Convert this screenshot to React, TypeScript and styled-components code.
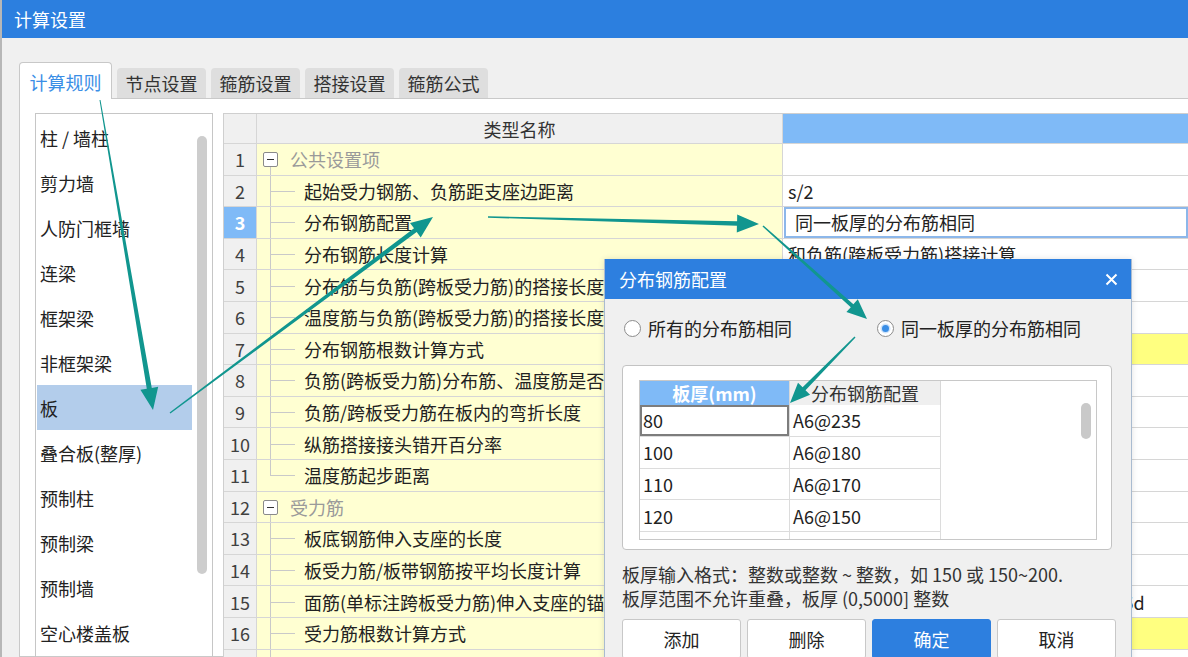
import styled, { createGlobalStyle, css } from "styled-components";

const font = `"Noto Sans CJK SC", "Noto Sans", sans-serif`;

const GlobalStyle = createGlobalStyle`
    html, body {
        margin: 0;
        padding: 0;
        overflow: hidden;
        font-family: ${font};
        font-size: 18px;
        color: #222;
    }

    * {
        box-sizing: border-box;
    }
`;

type RowKind = "group" | "child" | "last";

type Row = {
    n: number;
    kind: RowKind;
    name: string;
    value?: string;
    editing?: boolean;
    yellow?: boolean;
};

const rows: Row[] = [
    { n: 1, kind: "group", name: "公共设置项" },
    { n: 2, kind: "child", name: "起始受力钢筋、负筋距支座边距离", value: "s/2" },
    { n: 3, kind: "child", name: "分布钢筋配置", value: "同一板厚的分布筋相同", editing: true },
    { n: 4, kind: "child", name: "分布钢筋长度计算", value: "和负筋(跨板受力筋)搭接计算" },
    { n: 5, kind: "child", name: "分布筋与负筋(跨板受力筋)的搭接长度", value: "150" },
    { n: 6, kind: "child", name: "温度筋与负筋(跨板受力筋)的搭接长度", value: "ll" },
    { n: 7, kind: "child", name: "分布钢筋根数计算方式", value: "向下取整+1", yellow: true },
    { n: 8, kind: "child", name: "负筋(跨板受力筋)分布筋、温度筋是否带弯勾", value: "否" },
    { n: 9, kind: "child", name: "负筋/跨板受力筋在板内的弯折长度", value: "板厚-2*保护层" },
    { n: 10, kind: "child", name: "纵筋搭接接头错开百分率", value: "50%" },
    { n: 11, kind: "last", name: "温度筋起步距离", value: "s" },
    { n: 12, kind: "group", name: "受力筋" },
    { n: 13, kind: "child", name: "板底钢筋伸入支座的长度", value: "max(ha/2,5*d)" },
    { n: 14, kind: "child", name: "板受力筋/板带钢筋按平均长度计算", value: "否" },
    { n: 15, kind: "child", name: "面筋(单标注跨板受力筋)伸入支座的锚固长度", value: "能直锚时直锚，否则按公式计算:ha-bhc+15d" },
    { n: 16, kind: "child", name: "受力筋根数计算方式", value: "向上取整+1", yellow: true },
    { n: 17, kind: "child", name: "跨板受力筋标注长度位置", value: "支座中心线" },
];

const listItems = [
    "柱 / 墙柱",
    "剪力墙",
    "人防门框墙",
    "连梁",
    "框架梁",
    "非框架梁",
    "板",
    "叠合板(整厚)",
    "预制柱",
    "预制梁",
    "预制墙",
    "空心楼盖板",
    "螺旋板",
];

const tabs = ["计算规则", "节点设置", "箍筋设置", "搭接设置", "箍筋公式"];

const slabRows = [
    ["80", "A6@235"],
    ["100", "A6@180"],
    ["110", "A6@170"],
    ["120", "A6@150"],
    ["130", "A6@140"],
];

// annotation arrows: x1, y1, tip x, tip y, start width, end width, head length, head half width
const arrows: number[][] = [
    [100, 100, 153, 410, 1, 5, 22, 9],
    [170, 413, 433, 217, 1.5, 4.5, 22, 9],
    [488, 217, 759, 224, 1.5, 4.5, 22, 9],
    [763, 226, 867, 319, 1.5, 4, 20, 8.5],
    [855, 337, 790, 403, 1.5, 4, 20, 8.5],
];

const arrowPoints = ([x1, y1, x2, y2, w0, w1, hl, hw]: number[]) => {
    const dx = x2 - x1;
    const dy = y2 - y1;
    const len = Math.hypot(dx, dy);
    const ux = dx / len;
    const uy = dy / len;
    const nx = -uy;
    const ny = ux;
    const bx = x2 - ux * hl;
    const by = y2 - uy * hl;
    const p = (x: number, y: number) => `${x.toFixed(1)},${y.toFixed(1)}`;
    return [
        p(x1 + (nx * w0) / 2, y1 + (ny * w0) / 2),
        p(bx + (nx * w1) / 2, by + (ny * w1) / 2),
        p(bx + nx * hw, by + ny * hw),
        p(x2, y2),
        p(bx - nx * hw, by - ny * hw),
        p(bx - (nx * w1) / 2, by - (ny * w1) / 2),
        p(x1 - (nx * w0) / 2, y1 - (ny * w0) / 2),
    ].join(" ");
};

const App = () => {
    return (
        <>
            <GlobalStyle />
            <Window>
                <TitleBar>计算设置</TitleBar>
                <Body>
                    <TabStrip>
                        {tabs.map((t, i) => (
                            <Tab key={t} $active={i === 0}>
                                {t}
                            </Tab>
                        ))}
                    </TabStrip>
                    <Panel>
                        <ListBox>
                            <ListItems>
                                {listItems.map((item) => (
                                    <ListItem key={item} $selected={item === "板"}>
                                        {item}
                                    </ListItem>
                                ))}
                            </ListItems>
                            <ScrollLane>
                                <ListThumb />
                            </ScrollLane>
                        </ListBox>
                        <Table>
                            <NumHead />
                            <NameHead>类型名称</NameHead>
                            <ValueHead />
                            {rows.map((r) => (
                                <TableRow key={r.n} row={r} />
                            ))}
                        </Table>
                    </Panel>
                </Body>

                <Dialog>
                    <DialogTitle>
                        分布钢筋配置
                        <svg width="13" height="13" viewBox="0 0 13 13">
                            <path d="M1.5 1.5 L11.5 11.5 M11.5 1.5 L1.5 11.5" stroke="#fff" strokeWidth="2" />
                        </svg>
                    </DialogTitle>
                    <DialogBody>
                        <RadioRow>
                            <RadioOption>
                                <RadioCircle />
                                所有的分布筋相同
                            </RadioOption>
                            <RadioOption>
                                <RadioCircle $checked />
                                同一板厚的分布筋相同
                            </RadioOption>
                        </RadioRow>
                        <GroupBox>
                            <InnerTable>
                                <SlabGrid>
                                    <SlabHead $blue>板厚(mm)</SlabHead>
                                    <SlabHead>分布钢筋配置</SlabHead>
                                    {slabRows.map(([t, cfg], i) => (
                                        <SlabRowCells key={t}>
                                            <SlabCell $selected={i === 0}>{t}</SlabCell>
                                            <SlabCell>{cfg}</SlabCell>
                                        </SlabRowCells>
                                    ))}
                                </SlabGrid>
                                <EmptyArea>
                                    <SmallThumb />
                                </EmptyArea>
                            </InnerTable>
                        </GroupBox>
                        <Hint>
                            板厚输入格式：整数或整数 ~ 整数，如 150 或 150~200.
                            <br />
                            板厚范围不允许重叠，板厚 (0,5000] 整数
                        </Hint>
                        <ButtonRow>
                            <Button>添加</Button>
                            <Button>删除</Button>
                            <Button $primary>确定</Button>
                            <Button>取消</Button>
                        </ButtonRow>
                    </DialogBody>
                </Dialog>

                <Arrows width="1188" height="657" viewBox="0 0 1188 657">
                    {arrows.map((a, i) => (
                        <polygon key={i} points={arrowPoints(a)} fill="#11968f" />
                    ))}
                </Arrows>
            </Window>
        </>
    );
};

const TableRow = ({ row }: { row: Row }) => {
    const isGroup = row.kind === "group";
    return (
        <>
            <NumCell $active={row.n === 3}>{row.n}</NumCell>
            <NameCell>
                <Guide $kind={row.kind}>{isGroup && <MinusBox />}</Guide>
                <NameText $group={isGroup}>{row.name}</NameText>
            </NameCell>
            <ValueCell $yellow={row.yellow}>
                {row.editing ? <EditBox>{row.value}</EditBox> : <ValueText>{row.value}</ValueText>}
            </ValueCell>
        </>
    );
};

const Window = styled.div`
    position: relative;
    width: 1188px;
    height: 657px;
    overflow: hidden;
    display: flex;
    flex-direction: column;

    background: #f0f0f0;
    border-left: 2px solid #b7b7b7;
`;

const TitleBar = styled.div`
    height: 38px;
    flex-shrink: 0;
    display: flex;
    align-items: center;

    padding-left: 12px;

    background: #2c7fdf;
    color: #fff;
    font-size: 18px;
    line-height: 1;
`;

const Body = styled.div`
    flex: 1;
    min-height: 0;
    display: flex;
    flex-direction: column;

    padding: 24px 0 0 17px;
`;

const TabStrip = styled.div`
    display: flex;
    align-items: flex-end;
    gap: 5px;

    height: 36px;
    flex-shrink: 0;
    position: relative;
    z-index: 1;
`;

const Tab = styled.div<{ $active?: boolean }>`
    display: flex;
    align-items: center;
    justify-content: center;

    width: 89px;
    height: 30px;

    background: #dedede;
    border-radius: 4px 4px 0 0;
    color: #333;
    font-size: 18px;
    line-height: 1;

    ${({ $active }) =>
        $active &&
        css`
            width: 93px;
            height: 37px;
            margin-bottom: -1px;
            padding-top: 2px;

            background: #fff;
            border: 1px solid #c8c8c8;
            border-bottom: none;
            color: #3a8ee6;
        `}
`;

const Panel = styled.div`
    flex: 1;
    min-height: 0;
    display: flex;
    align-items: flex-start;

    padding: 14px 0 0 15px;

    background: #fff;
    border: 1px solid #c9c9c9;
    border-right: none;
`;

const ListBox = styled.div`
    display: flex;
    flex-shrink: 0;
    overflow: hidden;

    width: 178px;
    height: 580px;
    padding: 1px;

    border: 1px solid #c6c6c6;
`;

const ListItems = styled.div`
    display: flex;
    flex-direction: column;
    flex-shrink: 0;

    width: 155px;
`;

const ListItem = styled.div<{ $selected?: boolean }>`
    display: flex;
    align-items: center;
    flex-shrink: 0;

    height: 45px;
    padding-left: 3px;

    background: ${({ $selected }) => ($selected ? "#b3cdeb" : "transparent")};
    color: #222;
    font-size: 18px;
    line-height: 1;
    white-space: nowrap;
`;

const ScrollLane = styled.div`
    flex: 1;
    display: flex;
    justify-content: center;
    align-items: flex-start;
    padding-top: 21px;
`;

const ListThumb = styled.div`
    width: 10px;
    height: 438px;

    background: #cdcdcd;
    border-radius: 5px;
`;

const Table = styled.div`
    flex: 1;
    display: grid;
    grid-template-columns: 33px 526px 1fr;

    margin-left: 10px;

    border-top: 1px solid #cfcfcf;
    border-left: 1px solid #cfcfcf;
`;

const cellBase = css`
    display: flex;
    align-items: center;
    overflow: hidden;

    height: 31.6px;

    border-right: 1px solid #d6d6d6;
    border-bottom: 1px solid #d6d6d6;
    font-size: 18px;
    line-height: 1;
    white-space: nowrap;
`;

const NumHead = styled.div`
    ${cellBase};
    height: 30px;
    background: #f0f0f0;
`;

const NameHead = styled(NumHead)`
    justify-content: center;
    color: #333;
`;

const ValueHead = styled(NumHead)`
    background: #7fbaf7;
    border-right: none;
`;

const NumCell = styled.div<{ $active?: boolean }>`
    ${cellBase};
    justify-content: center;

    background: ${({ $active }) => ($active ? "#7fbaf7" : "#f0f0f0")};
    color: ${({ $active }) => ($active ? "#fff" : "#404040")};
    font-weight: ${({ $active }) => ($active ? 700 : 400)};
`;

const NameCell = styled.div`
    ${cellBase};
    background: #ffffd2;
`;

const Guide = styled.span<{ $kind: RowKind }>`
    position: relative;
    flex-shrink: 0;
    align-self: stretch;
    width: 47px;

    &::before {
        content: "";
        position: absolute;
        left: 13px;
        width: 1px;
        background: #c9c9c9;
        top: ${({ $kind }) => ($kind === "group" ? "calc(50% + 7px)" : "0")};
        bottom: ${({ $kind }) => ($kind === "last" ? "50%" : "-1px")};
    }

    &::after {
        content: "";
        display: ${({ $kind }) => ($kind === "group" ? "none" : "block")};
        position: absolute;
        left: 13px;
        top: 50%;
        width: 25px;
        height: 1px;
        background: #c9c9c9;
    }
`;

const MinusBox = styled.span`
    position: absolute;
    left: 6px;
    top: calc(50% - 7px);
    width: 15px;
    height: 15px;

    background: #fff;
    border: 1px solid #8a8a8a;
    border-radius: 2px;

    &::after {
        content: "";
        position: absolute;
        left: 3px;
        right: 3px;
        top: 6px;
        height: 1px;
        background: #333;
    }
`;

const NameText = styled.span<{ $group?: boolean }>`
    color: ${({ $group }) => ($group ? "#9a9a9a" : "#222")};
    margin-left: ${({ $group }) => ($group ? "-14px" : "0")};
`;

const ValueCell = styled.div<{ $yellow?: boolean }>`
    ${cellBase};
    border-right: none;
    background: ${({ $yellow }) => ($yellow ? "#ffff80" : "#fff")};
`;

const ValueText = styled.span`
    padding-left: 5px;
    color: #222;
`;

const EditBox = styled.div`
    display: flex;
    align-items: center;

    width: 100%;
    height: 100%;
    margin-left: 1px;
    padding-left: 9px;

    border: 2px solid #8cb7ea;
    color: #222;
`;

const Dialog = styled.div`
    position: absolute;
    left: 602px;
    top: 259px;
    width: 528px;
    height: 420px;
    z-index: 5;

    background: #f0f0f0;
    border: 1px solid #a9bbd0;
    border-top: none;
    box-shadow: 0 0 6px rgba(0, 0, 0, 0.12);
`;

const DialogTitle = styled.div`
    display: flex;
    align-items: center;
    justify-content: space-between;

    height: 40px;
    padding: 0 13px 0 14px;

    background: #2d7fdf;
    color: #fff;
    font-size: 18px;
    line-height: 1;
`;

const DialogBody = styled.div`
    padding: 17px 0 0 17px;
`;

const RadioRow = styled.div`
    display: grid;
    grid-template-columns: 253px auto;

    height: 24px;
    padding-left: 2px;
`;

const RadioOption = styled.label`
    display: flex;
    align-items: center;
    gap: 7px;

    color: #222;
    font-size: 18px;
    line-height: 1;
`;

const RadioCircle = styled.span<{ $checked?: boolean }>`
    display: flex;
    align-items: center;
    justify-content: center;

    width: 17px;
    height: 17px;

    background: #fff;
    border: 1px solid #8c8c8c;
    border-radius: 50%;

    &::after {
        content: "";
        display: ${({ $checked }) => ($checked ? "block" : "none")};
        width: 7px;
        height: 7px;
        border-radius: 50%;
        background: #3a8ee6;
        box-shadow: 0 0 0 1.5px #cfe3f9;
    }
`;

const GroupBox = styled.div`
    width: 490px;
    height: 185px;
    margin-top: 25px;
    padding: 14px 14px 0 16px;

    background: #fff;
    border: 1px solid #c3c3c3;
    border-radius: 4px;
`;

const InnerTable = styled.div`
    display: flex;
    height: 160px;
    overflow: hidden;

    border: 1px solid #c8c8c8;
`;

const SlabGrid = styled.div`
    display: grid;
    grid-template-columns: 150px 151px;
    align-content: start;
`;

const SlabRowCells = styled.div`
    display: contents;
`;

const SlabHead = styled.div<{ $blue?: boolean }>`
    display: flex;
    align-items: center;
    justify-content: center;

    height: 24px;

    background: ${({ $blue }) => ($blue ? "#7fbaf7" : "#efefef")};
    border-right: 1px solid #d8d8d8;
    color: ${({ $blue }) => ($blue ? "#fff" : "#333")};
    font-size: 18px;
    font-weight: ${({ $blue }) => ($blue ? 700 : 400)};
    line-height: 1;
`;

const SlabCell = styled.div<{ $selected?: boolean }>`
    display: flex;
    align-items: center;

    height: 31.8px;
    padding-left: 3px;

    border-right: 1px solid #dcdcdc;
    border-bottom: 1px solid #dcdcdc;
    color: #222;
    font-size: 18px;
    line-height: 1;

    ${({ $selected }) =>
        $selected &&
        css`
            box-shadow: inset 0 0 0 2px #7d7d7d;
        `}
`;

const EmptyArea = styled.div`
    flex: 1;
    display: flex;
    justify-content: flex-end;
    align-items: flex-start;

    padding: 22px 5px 0 0;
`;

const SmallThumb = styled.div`
    width: 10px;
    height: 36px;

    background: #c9c9c9;
    border-radius: 5px;
`;

const Hint = styled.p`
    margin: 12px 0 0 0;

    color: #333;
    font-size: 18px;
    line-height: 24px;
    white-space: nowrap;
`;

const ButtonRow = styled.div`
    display: grid;
    grid-template-columns: repeat(4, 119px);
    gap: 6px;

    margin-top: 9px;
`;

const Button = styled.button<{ $primary?: boolean }>`
    height: 40px;

    background: ${({ $primary }) => ($primary ? "#2d7fdf" : "#fff")};
    border: 1px solid ${({ $primary }) => ($primary ? "#2d7fdf" : "#c8c8c8")};
    border-radius: 3px;
    color: ${({ $primary }) => ($primary ? "#fff" : "#222")};
    font-family: ${font};
    font-size: 18px;
    line-height: 1;
`;

const Arrows = styled.svg`
    position: absolute;
    left: -2px;
    top: 0;
    z-index: 10;
    pointer-events: none;
`;

export default App;
